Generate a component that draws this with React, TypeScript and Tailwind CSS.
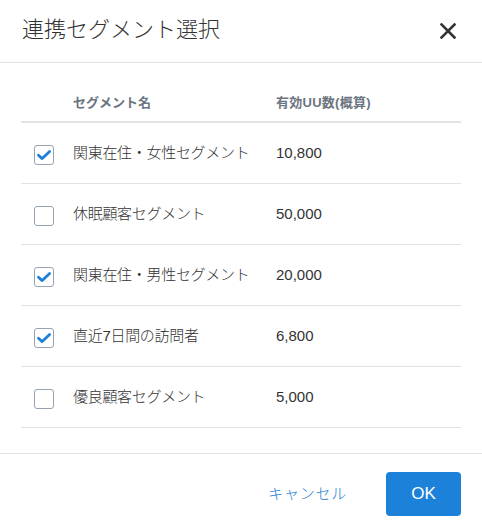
import React, { useState } from "react";

type Segment = { name: string; uu: string; checked: boolean };

const initialSegments: Segment[] = [
  { name: "関東在住・女性セグメント", uu: "10,800", checked: true },
  { name: "休眠顧客セグメント", uu: "50,000", checked: false },
  { name: "関東在住・男性セグメント", uu: "20,000", checked: true },
  { name: "直近7日間の訪問者", uu: "6,800", checked: true },
  { name: "優良顧客セグメント", uu: "5,000", checked: false },
];

const font = {
  fontFamily:
    '"Liberation Sans", Arial, "Noto Sans CJK JP", sans-serif',
};

function Checkbox({ checked, onChange }: { checked: boolean; onChange: () => void }) {
  return (
    <button
      type="button"
      onClick={onChange}
      className="flex h-[20px] w-[20px] items-center justify-center rounded-[3px] border-[1.5px] border-[#97a3b0] bg-white"
    >
      {checked && (
        <svg width="16" height="16" viewBox="0 0 16 16" fill="none">
          <path
            d="M2.5 8.2 L6.2 11.6 L13.6 4.4"
            stroke="#1f80d8"
            strokeWidth="2.8"
            strokeLinecap="round"
            strokeLinejoin="round"
          />
        </svg>
      )}
    </button>
  );
}

export default function App() {
  const [segments, setSegments] = useState(initialSegments);

  const toggle = (i: number) =>
    setSegments((s) => s.map((seg, j) => (j === i ? { ...seg, checked: !seg.checked } : seg)));

  return (
    <div className="h-[531px] w-[482px] bg-white text-[#333]" style={font}>
      {/* header */}
      <div className="flex h-[63px] items-center justify-between border-b border-[#e3e3e3] pl-[22px] pr-[26px]">
        <h1 className="pb-[3px] text-[22px] font-light leading-none text-[#333]">連携セグメント選択</h1>
        <button type="button" className="flex h-[16px] w-[16px] items-center justify-center">
          <svg width="16" height="16" viewBox="0 0 16 16">
            <path d="M1.5 1.5 L14.5 14.5 M14.5 1.5 L1.5 14.5" stroke="#333" strokeWidth="2.6" strokeLinecap="square" />
          </svg>
        </button>
      </div>

      {/* body */}
      <div className="px-[21px] pt-[21px] pb-[25px]">
        <div className="flex h-[39px] items-center border-b-2 border-[#e2e2e2] text-[13px] font-bold text-[#6b7580]">
          <div className="w-[255px] pl-[52px]">セグメント名</div>
          <div className="tracking-[0.02em]">有効UU数(概算)</div>
        </div>
        {segments.map((seg, i) => (
          <div key={seg.name} className="flex h-[61px] items-center border-b border-[#e3e3e3] text-[15px] text-[#333]">
            <div className="flex w-[52px] items-center pl-[13px] pt-[3px]">
              <Checkbox checked={seg.checked} onChange={() => toggle(i)} />
            </div>
            <div className="w-[203px] font-light tracking-[-0.02em]">{seg.name}</div>
            <div>{seg.uu}</div>
          </div>
        ))}
      </div>

      {/* footer */}
      <div className="flex items-center justify-end gap-[39px] border-t border-[#e3e3e3] pt-[18px] pr-[21px]">
        <button type="button" className="text-[15px] font-light tracking-[0.05em] text-[#2580d3]">
          キャンセル
        </button>
        <button
          type="button"
          className="flex h-[44px] w-[75px] items-center justify-center rounded-[4px] bg-[#1c82d9] text-[17px] text-white"
        >
          OK
        </button>
      </div>
    </div>
  );
}
